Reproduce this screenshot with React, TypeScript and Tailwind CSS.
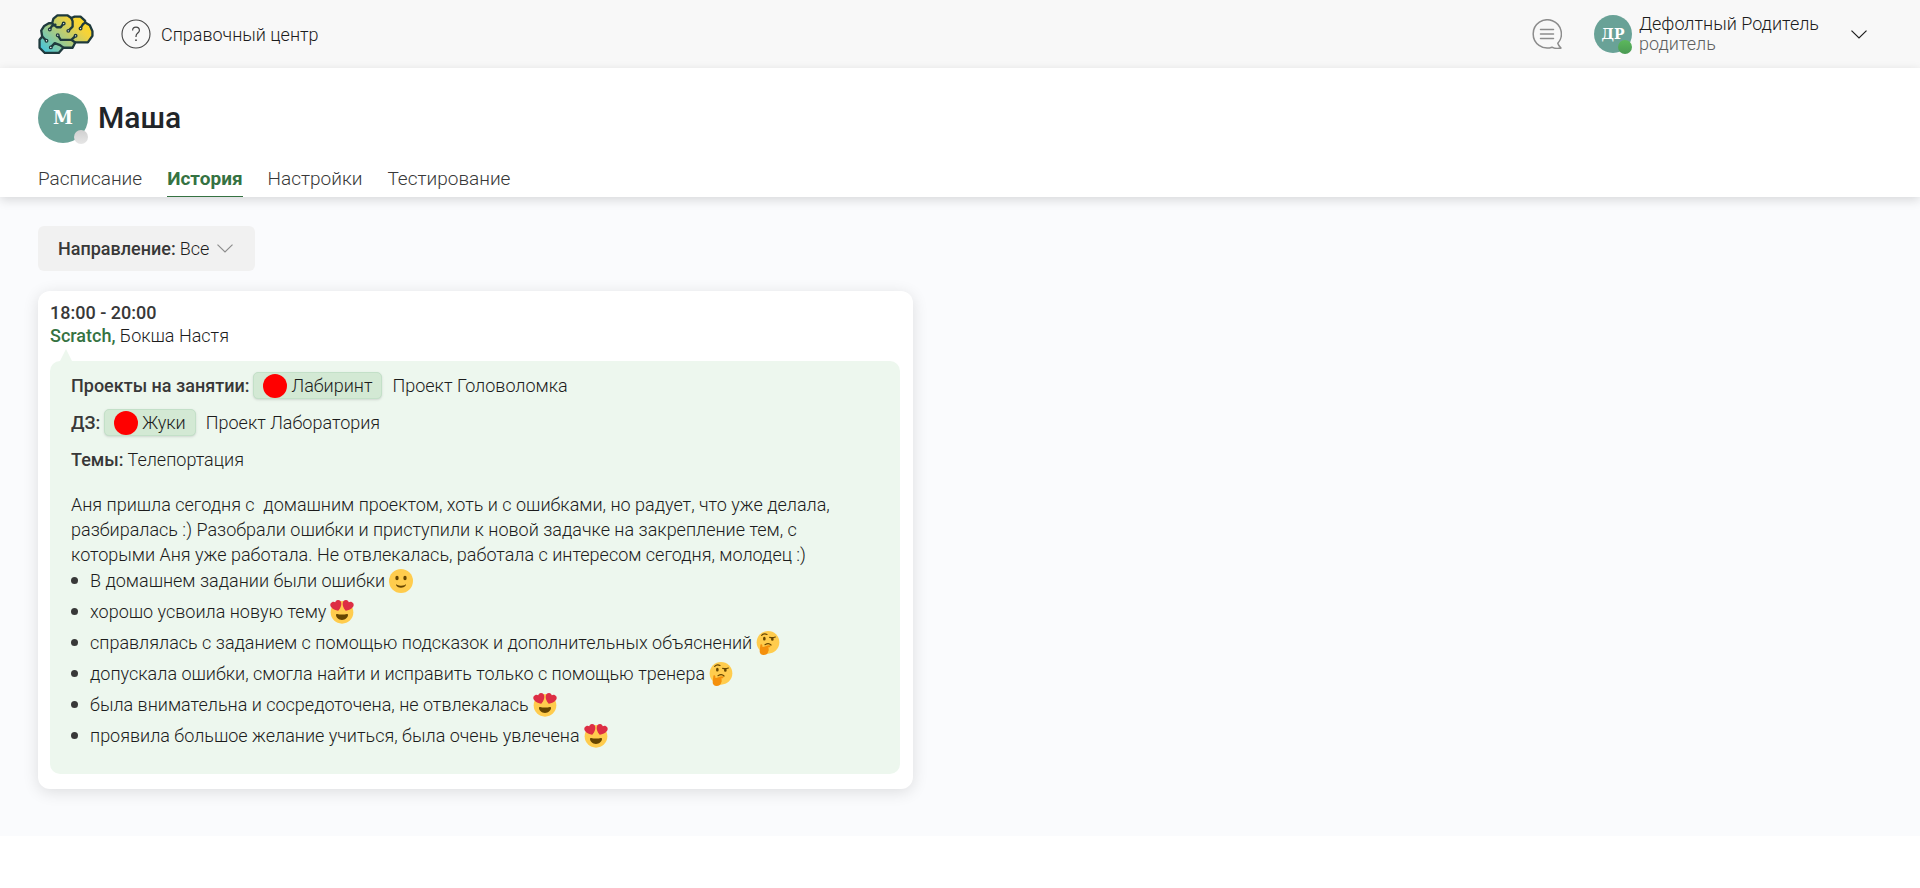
type EmojiName = 'smile' | 'love' | 'think';

const tabs = [
  { label: 'Расписание', active: false },
  { label: 'История', active: true },
  { label: 'Настройки', active: false },
  { label: 'Тестирование', active: false },
];

const notes: { text: string; emoji: EmojiName }[] = [
  { text: 'В домашнем задании были ошибки', emoji: 'smile' },
  { text: 'хорошо усвоила новую тему', emoji: 'love' },
  { text: 'справлялась с заданием с помощью подсказок и дополнительных объяснений', emoji: 'think' },
  { text: 'допускала ошибки, смогла найти и исправить только с помощью тренера', emoji: 'think' },
  { text: 'была внимательна и сосредоточена, не отвлекалась', emoji: 'love' },
  { text: 'проявила большое желание учиться, была очень увлечена', emoji: 'love' },
];

function Logo() {
  return (
    <svg viewBox="24 26 168 121" className="h-10 w-14" aria-hidden="true">
      <defs>
        <linearGradient id="brain" x1="0" y1="1" x2="1" y2="0.25">
          <stop offset="0" stopColor="#35c4ea" />
          <stop offset="0.45" stopColor="#a5cb86" />
          <stop offset="0.8" stopColor="#f3d23c" />
          <stop offset="1" stopColor="#ffd91c" />
        </linearGradient>
      </defs>
      <g stroke="#1f3a3d" strokeWidth="7" strokeLinejoin="round" strokeLinecap="round">
        <path
          fill="url(#brain)"
          d="M82 30H112L124 38L134 34H152L166 47V52L180 60L188 78V92L174 112H136L128 128H100L86 144H44L28 128V104L36 94L33 76L42 62L56 54H66L70 40Z"
        />
        <path
          fill="none"
          d="M59 72L66 62L76 58M66 54L80 66H92L101 54M124 38L128 48V64L115 77M166 52L160 56L152 69M83 90L92 104H124L137 92M124 104L136 112M36 94L49 107M62 127L74 114L90 120L100 128"
        />
      </g>
      <g fill="#fff" stroke="#1f3a3d" strokeWidth="4">
        <circle cx="59" cy="73" r="4" />
        <circle cx="101" cy="55" r="4" />
        <circle cx="115" cy="77" r="4" />
        <circle cx="152" cy="70" r="4" />
        <circle cx="137" cy="92" r="4" />
        <circle cx="83" cy="90" r="4" />
        <circle cx="49" cy="107" r="4" />
        <circle cx="62" cy="127" r="4" />
      </g>
    </svg>
  );
}

function HelpIcon() {
  return (
    <svg viewBox="0 0 30 30" className="size-[30px]" fill="none" stroke="#444" aria-hidden="true">
      <circle cx="15" cy="15" r="14" strokeWidth="1.1" />
      <path d="M11.6 11.6C11.6 9.400 13 8.200 15 8.200S18.400 9.500 18.400 11.400C18.400 14 15 14.200 15 17.200V18" strokeWidth="1.2" />
      <circle cx="15" cy="21.200" r="0.9" fill="#444" stroke="none" />
    </svg>
  );
}

function ChatIcon() {
  return (
    <svg viewBox="0 0 30 30" className="size-[30px]" fill="none" stroke="#8c8c8c" strokeWidth="1.500" strokeLinecap="round" strokeLinejoin="round" aria-hidden="true">
      <path d="M25.800 24.300A14.100 14.100 0 1 0 20 28.200C22 29.300 25.500 29.800 29 29C27.600 27.800 26.300 26.300 25.800 24.300Z" />
      <path d="M8.500 10.500H21.500M8.500 15H21.500M8.500 19.500H21.500" />
    </svg>
  );
}

function Chevron({ className }: { className: string }) {
  return (
    <svg viewBox="0 0 16 9" className={className} fill="none" stroke="currentColor" strokeWidth="1.200" aria-hidden="true">
      <path d="M0.500 0.600L8 8L15.500 0.600" />
    </svg>
  );
}

function Emoji({ name }: { name: EmojiName }) {
  return (
    <svg viewBox="0 0 36 36" className="ml-1 size-6 shrink-0 overflow-visible" aria-hidden="true">
      {name === 'smile' && (
        <>
          <circle cx="18" cy="18" r="18" fill="#FFCC4D" />
          <ellipse cx="12" cy="13.500" rx="2.500" ry="3.500" fill="#664500" />
          <ellipse cx="24" cy="13.500" rx="2.500" ry="3.500" fill="#664500" />
          <path
            fill="#664500"
            d="M10.515 23.621C10.560 23.800 11.683 28 18 28c6.318 0 7.440-4.200 7.485-4.379.055-.217-.043-.442-.237-.554-.195-.111-.439-.078-.6.077C24.629 23.163 22.694 25 18 25s-6.630-1.837-6.648-1.855C11.256 23.050 11.128 23 11 23c-.084 0-.169.021-.246.064-.196.112-.294.339-.239.557z"
          />
        </>
      )}
      {name === 'love' && (
        <>
          <circle cx="18" cy="18.500" r="17" fill="#FFCC4D" />
          <path
            fill="#664500"
            d="M18 21.849c-2.966 0-4.935-.346-7.369-.819-.557-.106-1.638 0-1.638 1.638 0 3.275 3.763 7.369 9.007 7.369s9.007-4.094 9.007-7.369c0-1.638-1.082-1.745-1.638-1.638-2.434.473-4.402.819-7.369.819"
          />
          <path
            fill="#DD2E44"
            d="M16.650 3.281C15.791.85 13.126-.426 10.694.431c-1.476.52-2.521 1.711-2.928 3.104-1.191-.829-2.751-1.100-4.225-.58C1.111 3.813-.167 6.480.692 8.911c.122.344.284.663.472.958 1.951 3.582 7.588 6.100 11.001 6.131 2.637-2.167 5.446-7.665 4.718-11.677-.038-.348-.113-.698-.233-1.042zm2.700 0C20.209.85 22.875-.426 25.306.431c1.476.52 2.521 1.711 2.929 3.104 1.191-.829 2.751-1.100 4.225-.58 2.430.858 3.707 3.525 2.850 5.956-.123.344-.284.663-.473.958-1.951 3.582-7.588 6.100-11.002 6.131-2.637-2.167-5.445-7.665-4.717-11.677.037-.348.112-.698.232-1.042z"
          />
        </>
      )}
      {name === 'think' && (
        <>
          <circle cx="18" cy="17" r="17" fill="#FFCC4D" />
          <ellipse cx="12.500" cy="11.500" rx="2" ry="2.800" fill="#664500" />
          <ellipse cx="24.500" cy="12" rx="2" ry="2.800" fill="#664500" />
          <path
            fill="none"
            stroke="#664500"
            strokeWidth="1.800"
            strokeLinecap="round"
            d="M8.500 6.500C10.500 4.500 14 4 16.500 5.200M20.500 9.500C23.500 10.200 26.500 10 29 9M13.500 20.500C17 18.500 20.500 18.800 22.500 21"
          />
          <path
            fill="#F4900C"
            d="M6.500 21.500C6.500 19.500 9.300 19.300 9.500 21.500L9.700 24C12.500 23.500 16 21.800 19.500 21.300C21.800 21 22.700 23.200 20.500 24.200L17.500 25.300C19 25.500 19.600 27 18.800 28.200C19.300 29.600 18.700 30.700 18 31.200C18.300 34 15 36 11.500 36C7.500 36 5.300 33.500 5.500 30Z"
          />
        </>
      )}
    </svg>
  );
}

function ProjectLink({ name }: { name: string }) {
  return (
    <a
      href="#project"
      className="ml-1 flex h-[27px] items-center gap-1 rounded-[5px] border border-[#c3e0c8] bg-[#d3e9d4] px-[9px] shadow-sm"
    >
      <span className="size-6 rounded-full bg-[#ff0000]" />
      {name}
    </a>
  );
}

export default function App() {
  return (
    <div className="bg-white font-['Roboto',sans-serif] text-lg leading-[25px] font-light text-[#1c1c1c]">
      <header className="flex h-[68px] items-center bg-[#f8f8f8] px-[38px]">
        <a href="#home" aria-label="Главная">
          <Logo />
        </a>
        <a href="#help" className="ml-[27px] flex items-center gap-[10px]">
          <HelpIcon />
          Справочный центр
        </a>
        <button type="button" aria-label="Сообщения" className="ml-auto">
          <ChatIcon />
        </button>
        <button type="button" className="ml-8 flex items-center pr-[15px] text-left">
          <span className="relative flex size-[38px] items-center justify-center rounded-full bg-[#69a297] font-['DejaVu_Serif',serif] text-sm font-bold text-white">
            ДР
            <span className="absolute right-0 -bottom-px size-[14px] rounded-full bg-linear-to-b from-[#5cb85c] to-[#4a9a53]" />
          </span>
          <span className="ml-[7px] flex flex-col leading-5">
            <span>Дефолтный Родитель</span>
            <span className="text-[#5f5f5f]">родитель</span>
          </span>
          <Chevron className="ml-8 h-[9px] w-4" />
        </button>
      </header>

      <section className="relative bg-white px-[38px] pt-[25px] shadow-[0_3px_10px_rgba(0,0,0,0.14)]">
        <div className="flex items-center gap-[10px]">
          <span className="relative flex size-[50px] items-center justify-center rounded-full bg-[#69a297] font-['DejaVu_Serif',serif] text-lg font-bold text-white">
            М
            <span className="absolute right-0 -bottom-px size-[14px] rounded-full bg-linear-to-b from-[#d0d0d0] to-[#e6e6e6]" />
          </span>
          <h1 className="text-3xl font-medium text-[#212529]">Маша</h1>
        </div>
        <nav className="mt-[23px] flex gap-[25px] text-[19px]">
          {tabs.map((tab) => (
            <a
              key={tab.label}
              href="#tab"
              aria-current={tab.active ? 'page' : undefined}
              className={
                tab.active
                  ? 'border-b border-[#357242] pb-[5px] font-bold text-[#357242]'
                  : 'border-b border-transparent pb-[5px] text-[#383838]'
              }
            >
              {tab.label}
            </a>
          ))}
        </nav>
      </section>

      <main className="flex flex-col items-start gap-5 bg-[#fafbfd] px-[38px] pt-[29px] pb-[47px]">
        <div className="relative flex h-[45px] items-center rounded-md bg-[#f1f1f1]">
          <label htmlFor="direction" className="pl-5 font-medium text-[#383838]">
            Направление:
          </label>
          <select id="direction" className="h-full appearance-none bg-transparent pr-[45px] pl-1">
            <option>Все</option>
          </select>
          <Chevron className="pointer-events-none absolute right-[22px] h-[9px] w-4 text-[#8c8c8c]" />
        </div>

        <article className="w-full max-w-[875px] rounded-xl bg-white pt-[10px] pr-[13px] pb-[15px] pl-3 shadow-[0_3px_16px_rgba(0,0,0,0.12)]">
          <div className="leading-[23px]">
            <p className="font-medium text-[#383838]">18:00 - 20:00</p>
            <p>
              <span className="font-medium text-[#357242]">Scratch,</span> Бокша Настя
            </p>
          </div>
          <svg viewBox="0 0 14 14" className="mt-[2px] ml-[9px] h-3 w-[14px]" aria-hidden="true">
            <path d="M7 0L14 14H0Z" fill="#edf7ee" />
          </svg>
          <div className="rounded-[10px] bg-[#edf7ee] px-[21px] pt-[11px] pb-5">
            <div className="flex flex-col gap-[10px]">
              <div className="flex h-[27px] items-center">
                <span className="font-medium text-[#383838]">Проекты на занятии:</span>
                <ProjectLink name="Лабиринт" />
                <span className="ml-[10px]">Проект Головоломка</span>
              </div>
              <div className="flex h-[27px] items-center">
                <span className="font-medium text-[#383838]">ДЗ:</span>
                <ProjectLink name="Жуки" />
                <span className="ml-[10px]">Проект Лаборатория</span>
              </div>
              <p className="leading-[27px]">
                <span className="font-medium text-[#383838]">Темы:</span> Телепортация
              </p>
            </div>
            <p className="mt-[19px]">
              Аня пришла сегодня с&nbsp; домашним проектом, хоть и с ошибками, но радует, что уже делала, разбиралась
              :) Разобрали ошибки и приступили к новой задачке на закрепление тем, с которыми Аня уже работала. Не
              отвлекалась, работала с интересом сегодня, молодец :)
            </p>
            <ul className="pt-px">
              {notes.map((note) => (
                <li key={note.text} className="mb-[6px] flex items-center">
                  <span className="mr-3 size-[7px] rounded-full bg-[#383838]" />
                  {note.text}
                  <Emoji name={note.emoji} />
                </li>
              ))}
            </ul>
          </div>
        </article>
      </main>
    </div>
  );
}
